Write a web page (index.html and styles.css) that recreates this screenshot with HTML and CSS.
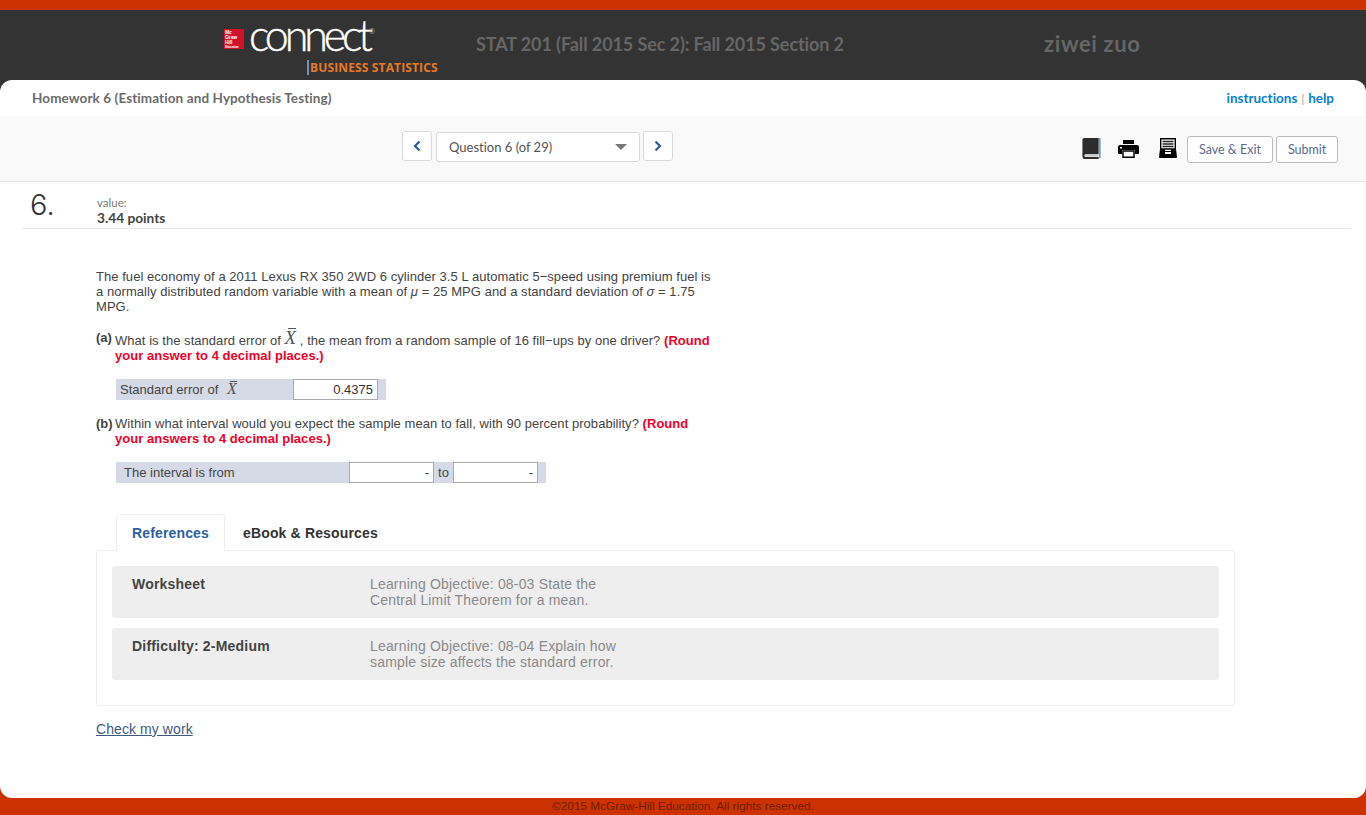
FILE: index.html
```html
<!DOCTYPE html>
<html lang="en">
<head>
<meta charset="utf-8">
<title>Homework 6</title>
<link rel="stylesheet" href="styles.css">
</head>
<body>
<div class="topstrip"></div>
<header class="masthead">
  <div class="brand">
    <div class="brand-main">
      <div class="mh-logo"><span>Mc</span><span>Graw</span><span>Hill</span><span class="mh-edu">Education</span></div>
      <span class="wordmark">connect</span><span class="reg">®</span>
    </div>
    <div class="brand-sub">BUSINESS STATISTICS</div>
  </div>
  <div class="course">STAT 201 (Fall 2015 Sec 2): Fall 2015 Section 2</div>
  <div class="user">ziwei zuo</div>
</header>
<main class="panel">
  <div class="titlebar">
    <div class="hw-title">Homework 6 (Estimation and Hypothesis Testing)</div>
    <div class="helplinks"><a>instructions</a><span class="sep">|</span><a>help</a></div>
  </div>
  <div class="toolbar">
    <div class="qnav">
      <button class="nav-btn"><svg width="8" height="12" viewBox="0 0 8 12"><path d="M6.500 1.500 2 6l4.500 4.500" fill="none" stroke="#2b5c9e" stroke-width="2.200"/></svg></button>
      <div class="qselect"><span>Question 6 (of 29)</span><i class="caret"></i></div>
      <button class="nav-btn"><svg width="8" height="12" viewBox="0 0 8 12"><path d="M1.500 1.500 6 6l-4.500 4.500" fill="none" stroke="#2b5c9e" stroke-width="2.200"/></svg></button>
    </div>
    <div class="tools">
      <svg class="tool-book" width="19" height="21" viewBox="0 0 19 22"><path d="M2 0h15v17H3.500a1.500 1.500 0 0 0 0 3H17v2H3a3 3 0 0 1-3-3V2a2 2 0 0 1 2-2z" fill="#2c2c2c"/><path d="M3 18h14v1.500H3z" fill="#bbb"/><path d="M17.500 0H19v21h-1.500z" fill="#5a8fc7"/></svg>
      <svg class="tool-print" width="21" height="18" viewBox="0 0 21 18"><path d="M5 0h11v4H5z" fill="#000"/><path d="M2 5h17a2 2 0 0 1 2 2v6a1 1 0 0 1-1 1h-3v-4H4v4H1a1 1 0 0 1-1-1V7a2 2 0 0 1 2-2z" fill="#000"/><path d="M5 11h11v6.300H5z" fill="#fff" stroke="#000" stroke-width="1.500"/><rect x="2" y="7" width="2" height="1.500" fill="#fff"/></svg>
      <svg class="tool-file" width="18" height="20" viewBox="0 0 18 20"><path d="M1.700.7h14.600V11H1.700z" fill="#fff" stroke="#000" stroke-width="1.400"/><path d="M3.500 3.500h11M3.500 6h11M3.500 8.500h11" stroke="#222" stroke-width="1.300"/><path d="M1 11h5v2h6v-2h5l1 8a1 1 0 0 1-1 1H1a1 1 0 0 1-1-1z" fill="#000"/><rect x="6" y="14" width="6" height="2" fill="#fff"/></svg>
      <button class="action first">Save &amp; Exit</button>
      <button class="action">Submit</button>
    </div>
  </div>
  <div class="qhead">
    <div class="qnum">6.</div>
    <div class="qvalue"><div class="v-label">value:</div><div class="v-points">3.44 points</div></div>
  </div>
  <div class="content">
    <p class="stem">The fuel economy of a 2011 Lexus RX 350 2WD 6 cylinder 3.5 L automatic 5−speed using premium fuel is<br>a normally distributed random variable with a mean of <i>μ</i> = 25 MPG and a standard deviation of <i>σ</i> = 1.75<br>MPG.</p>

    <div class="part part-a">
      <b class="part-label">(a)</b>
      <p>What is the standard error of <span class="xbar big">X</span> , the mean from a random sample of 16 fill−ups by one driver? <b class="red">(Round<br>your answer to 4 decimal places.)</b></p>
    </div>
    <div class="answer answer-a">
      <span class="a-label">Standard error of <span class="xbar">X</span></span>
      <input class="field field-a" value="0.4375">
    </div>

    <div class="part part-b">
      <b class="part-label">(b)</b>
      <p>Within what interval would you expect the sample mean to fall, with 90 percent probability? <b class="red">(Round<br>your answers to 4 decimal places.)</b></p>
    </div>
    <div class="answer answer-b">
      <span class="b-label">The interval is from</span>
      <input class="field field-b" value="-">
      <span class="to">to</span>
      <input class="field field-b" value="-">
    </div>

    <div class="tabs">
      <div class="tab active">References</div>
      <div class="tab">eBook &amp; Resources</div>
    </div>
    <div class="refbox">
      <div class="refrow"><b>Worksheet</b><span>Learning Objective: 08-03 State the<br>Central Limit Theorem for a mean.</span></div>
      <div class="refrow"><b>Difficulty: 2-Medium</b><span>Learning Objective: 08-04 Explain how<br>sample size affects the standard error.</span></div>
    </div>
    <a class="check">Check my work</a>
  </div>
</main>
<footer class="foot">©2015 McGraw-Hill Education. All rights reserved.</footer>
</body>
</html>
```
FILE: styles.css
```css
* { box-sizing: border-box; }
html, body { margin: 0; padding: 0; }
body {
  width: 1366px;
  height: 815px;
  overflow: hidden;
  background: linear-gradient(#333 0 100px, #cc3300 100px);
  display: flex;
  flex-direction: column;
  font-family: "Liberation Sans", Arial, sans-serif;
  font-variant-ligatures: none;
  color: #333;
}
.topstrip { height: 10px; flex: none; background: #cc3300; }
.masthead {
  height: 70px;
  flex: none;
  background: #333;
  display: flex;
  padding-left: 224px;
}
.brand { width: 252px; flex: none; }
.brand-main { display: flex; align-items: flex-start; height: 46px; padding-top: 7px; }
.mh-logo {
  width: 20px;
  height: 20px;
  margin-top: 12px;
  padding: 1px 0 0 1px;
  flex: none;
  background: #d2112a;
  display: flex;
  flex-direction: column;
  color: #fff;
  font-size: 5px;
  line-height: 5px;
  font-weight: 700;
  letter-spacing: -0.100px;
}
.mh-logo .mh-edu { font-size: 3px; line-height: 4px; }
.wordmark {
  font-family: Lato, sans-serif;
  font-weight: 300;
  font-size: 43px;
  line-height: 36px;
  letter-spacing: -4.100px;
  color: #fff;
  margin-left: 5px;
  -webkit-text-stroke: 0.400px #fff;
}
.reg { color: #bbb; font-size: 8px; line-height: 10px; margin: 10px 0 0 0; }
.brand-sub {
  margin-left: 83px;
  padding-left: 1px;
  margin-top: 4px;
  border-left: 2px solid #6b94b5;
  height: 15px;
  font-family: "Open Sans", sans-serif;
  font-weight: 700;
  font-size: 12px;
  line-height: 15px;
  letter-spacing: 0.140px;
  color: #e8792a;
  white-space: nowrap;
}
.course {
  width: 568px;
  flex: none;
  font-family: Lato, sans-serif;
  font-weight: 700;
  font-size: 18px;
  line-height: 68px;
  letter-spacing: -0.100px;
  color: #666;
}
.user {
  font-family: Lato, sans-serif;
  font-weight: 700;
  font-size: 22px;
  line-height: 68px;
  letter-spacing: 0.600px;
  color: #666;
}
.panel {
  height: 718px;
  flex: none;
  background: #fff;
  border-radius: 12px;
  overflow: hidden;
}
.titlebar {
  height: 36px;
  display: flex;
  justify-content: space-between;
  padding: 0 32px;
  line-height: 37px;
  font-family: Lato, sans-serif;
  font-size: 13.500px;
  font-weight: 700;
}
.hw-title { color: #6b6b6b; letter-spacing: 0.100px; }
.helplinks { color: #0a7fd0; }
.sep { color: #999; font-weight: 400; margin: 0 4px; font-size: 11px; }
.toolbar {
  height: 66px;
  background: #f9f9f9;
  border-bottom: 1px solid #e8e8e8;
  display: flex;
  padding-left: 402px;
}
.qnav { display: flex; gap: 4px; width: 680px; flex: none; padding-top: 15px; align-items: flex-start; }
.nav-btn {
  width: 30px;
  height: 30px;
  margin: 0;
  padding: 0;
  background: #fff;
  border: 1px solid #d9d9d9;
  border-radius: 3px;
  display: flex;
  align-items: center;
  justify-content: center;
}
.qselect {
  width: 204px;
  height: 30px;
  margin: 1px -1px 0 0;
  background: #fff;
  border: 1px solid #d9d9d9;
  border-radius: 3px;
  padding: 0 12px 0 12px;
  display: flex;
  align-items: center;
  justify-content: space-between;
  font-family: Lato, sans-serif;
  font-size: 13px;
  color: #555;
}
.caret { width: 0; height: 0; border: 6px solid transparent; border-top: 6px solid #777; border-bottom: 0; }
.tools { display: flex; align-items: flex-start; padding-top: 20px; }
.tool-book { margin: 2px 0 0 0; }
.tool-print { margin: 4px 0 0 17px; }
.tool-file { margin: 2px 0 0 20px; }
.action {
  height: 27px;
  margin: 0 0 0 3px;
  padding: 0 11px;
  background: #fff;
  border: 1px solid #bbb;
  border-radius: 3px;
  font-family: Lato, sans-serif;
  font-size: 12.500px;
  color: #5a6a8c;
}
.action.first { margin-left: 10px; }
.qhead {
  height: 47px;
  margin: 0 15px 0 22px;
  border-bottom: 1px solid #e8e8e8;
  display: flex;
}
.qnum {
  width: 75px;
  padding-left: 8px;
  font-family: Inter, sans-serif;
  font-weight: 300;
  font-size: 29px;
  line-height: 46px;
  color: #333;
}
.qvalue { padding-top: 14px; font-family: Lato, sans-serif; }
.v-label { font-size: 11.500px; line-height: 14px; color: #777; }
.v-points { font-size: 13.700px; line-height: 16px; font-weight: 700; color: #444; }
.content { padding: 40px 0 0 96px; font-size: 13px; line-height: 15px; color: #444; }
.content p { margin: 0; }
.stem { letter-spacing: 0.050px; }
.part { display: flex; margin-top: 17px; letter-spacing: 0.040px; }
.part-a { height: 30px; }
.part-b { height: 30px; margin-top: 16px; }
.part-label { width: 19px; flex: none; margin-top: 0; font-size: 13px; letter-spacing: 0; }
.part-a .part-label { margin-top: -1px; }
.red { color: #f00028; }
.xbar {
  position: relative;
  display: inline-block;
  font-family: "Liberation Serif", serif;
  font-style: italic;
  font-size: 16px;
  line-height: 10px;
  color: #555;
}
.xbar::before {
  content: "";
  position: absolute;
  top: -3px;
  left: 3px;
  right: 0;
  height: 1px;
  background: #555;
}
.a-label .xbar { margin-left: 5px; }
.xbar.big { font-size: 19px; line-height: 13px; vertical-align: 1px; }
.answer {
  margin: 18px 0 0 20px;
  height: 21px;
  background: #d6dae6;
  display: flex;
  align-items: center;
  font-size: 13px;
}
.answer-a { width: 270px; padding-left: 4px; }
.answer-b { width: 430px; padding-left: 8px; margin-top: 16px; }
.a-label { width: 173px; flex: none; }
.b-label { width: 225px; flex: none; }
.field {
  margin: 0;
  padding: 0 4px;
  height: 21px;
  border: 1px solid #aaa;
  background: #fff;
  text-align: right;
  font: 13px "Liberation Sans", Arial, sans-serif;
  color: #333;
}
.field-a { width: 85px; }
.field-b { width: 85px; }
.to { width: 19px; text-align: center; flex: none; }
.tabs { display: flex; margin: 31px 0 0 20px; position: relative; z-index: 1; height: 37px; font-size: 14px; font-weight: 700; letter-spacing: 0.150px; }
.tab { padding: 0 16px 0 18px; line-height: 39px; color: #333; }
.tab.active {
  padding: 0 15px;
  line-height: 37px;
  color: #2f5f9e;
  background: #fff;
  border: 1px solid #eee;
  border-bottom: 0;
  border-radius: 3px 3px 0 0;
}
.refbox {
  width: 1139px;
  height: 156px;
  margin-top: -1px;
  border: 1px solid #eee;
  border-radius: 3px;
  padding: 15px;
  display: flex;
  flex-direction: column;
  gap: 10px;
}
.refrow {
  height: 52px;
  background: #eee;
  border-radius: 3px;
  display: flex;
  padding: 10px 20px 0;
  font-size: 14px;
  line-height: 16px;
}
.refrow b { width: 238px; flex: none; color: #444; letter-spacing: 0.200px; }
.refrow span { color: #8a8a8a; letter-spacing: 0.170px; }
.check { display: inline-block; margin-top: 15px; font-size: 14px; line-height: 16px; letter-spacing: 0.080px; color: #3e5a80; text-decoration: underline; }
.foot {
  flex: 1;
  background: #cc3300;
  text-align: center;
  font-size: 11.800px;
  line-height: 17px;
  color: #6e1f00;
}
```
